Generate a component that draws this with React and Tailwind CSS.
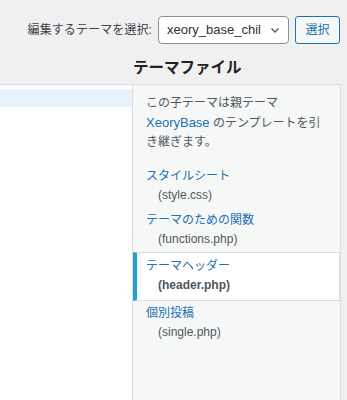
export default function App() {
  const font = { fontFamily: '"Liberation Sans", "Noto Sans CJK JP", sans-serif' };
  const files = [
    { title: "スタイルシート", file: "(style.css)" },
    { title: "テーマのための関数", file: "(functions.php)" },
    { title: "テーマヘッダー", file: "(header.php)", current: true },
    { title: "個別投稿", file: "(single.php)" },
  ];
  return (
    <div className="w-[347px] h-[400px] bg-[#f0f0f1] flex flex-col overflow-hidden" style={font}>
      <div className="flex justify-end items-center pt-[16px] pr-[7px] gap-[6px]">
        <span className="text-[12px] text-[#3c434a] leading-[28px] tracking-[0.1px]">編集するテーマを選択:</span>
        <div className="w-[131px] h-[28px] border border-[#8c8f94] rounded-[4px] bg-white flex items-center pl-[8px] pr-[8px] justify-between">
          <span className="text-[13px] text-[#2c3338] whitespace-nowrap overflow-hidden">xeory_base_chil</span>
          <svg width="10" height="10" viewBox="0 0 10 10" className="shrink-0 ml-[4px]">
            <path d="M1.5 3.5 L5 7 L8.5 3.5" fill="none" stroke="#50575e" strokeWidth="1.4" />
          </svg>
        </div>
        <button className="w-[45px] h-[28px] border border-[#2271b1] rounded-[3px] bg-[#f6f7f7] text-[#2271b1] text-[12px] flex items-center justify-center">選択</button>
      </div>
      <div className="pl-[133px] mt-[14px] mb-[6px] h-[20px] flex items-center">
        <h2 className="text-[15.5px] font-semibold text-[#1d2327] leading-[20px]">テーマファイル</h2>
      </div>
      <div className="flex flex-1 min-h-0">
        <div className="w-[132px] bg-white border-t border-[#dcdcde]">
          <div className="mt-[4px] h-[18px] bg-[#e8f2fe]"></div>
        </div>
        <div className="w-[209px] bg-[#f6f7f7] border-l border-t border-r border-[#dcdcde]">
          <p className="px-[13px] pt-[9px] text-[12px] leading-[19px] text-[#50575e]">
            この子テーマは親テーマ<br />
            <span className="text-[13px] text-[#2271b1]">XeoryBase</span> のテンプレートを引<br />
            き継ぎます。
          </p>
          <ul className="mt-[12px]">
            {files.map((f) =>
              f.current ? (
                <li key={f.file} className="bg-white border-y border-r border-[#dcdcde] border-l-[4px] border-l-[#21a0d2] pl-[9px] pt-[4px] pb-[5px]">
                  <div className="text-[12px] leading-[19px] text-[#2271b1]">{f.title}</div>
                  <div className="text-[12px] leading-[19px] text-[#50575e] font-bold pl-[12px]">{f.file}</div>
                </li>
              ) : (
                <li key={f.file} className="pl-[13px] py-[3px]">
                  <div className="text-[12px] leading-[19px] text-[#2271b1]">{f.title}</div>
                  <div className="text-[12px] leading-[19px] text-[#50575e] pl-[12px]">{f.file}</div>
                </li>
              )
            )}
          </ul>
        </div>
      </div>
    </div>
  );
}
